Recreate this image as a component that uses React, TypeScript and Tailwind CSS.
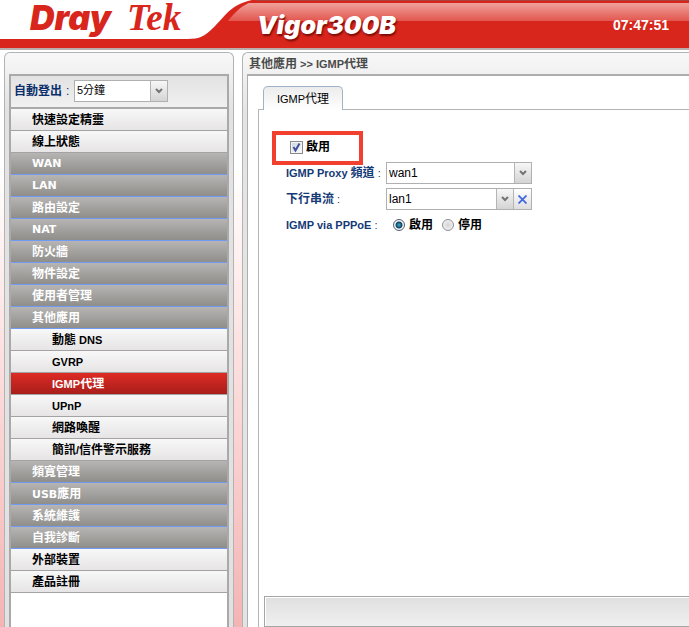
import { Fragment, useState } from "react";

type Item = { label: string; kind: "link" | "group" | "sub" };

const MENU: Item[] = [
  { label: "快速設定精靈", kind: "link" },
  { label: "線上狀態", kind: "link" },
  { label: "WAN", kind: "group" },
  { label: "LAN", kind: "group" },
  { label: "路由設定", kind: "group" },
  { label: "NAT", kind: "group" },
  { label: "防火牆", kind: "group" },
  { label: "物件設定", kind: "group" },
  { label: "使用者管理", kind: "group" },
  { label: "其他應用", kind: "group" },
  { label: "動態 DNS", kind: "sub" },
  { label: "GVRP", kind: "sub" },
  { label: "IGMP代理", kind: "sub" },
  { label: "UPnP", kind: "sub" },
  { label: "網路喚醒", kind: "sub" },
  { label: "簡訊/信件警示服務", kind: "sub" },
  { label: "頻寬管理", kind: "group" },
  { label: "USB應用", kind: "group" },
  { label: "系統維護", kind: "group" },
  { label: "自我診斷", kind: "group" },
  { label: "外部裝置", kind: "link" },
  { label: "產品註冊", kind: "link" },
];

const KIND_CLASS = {
  link: "border-b border-[#a3a3a3] bg-linear-to-b from-[#f8f8f8] to-[#e6e4e4] pl-[21px] text-black",
  group:
    "border-b border-[#6f9bf5] bg-linear-to-b from-[#b6b5b3] to-[#8f8e8b] pl-[21px] text-white font-['DejaVu_Sans','Noto_Sans_CJK_TC',sans-serif]",
  sub: "border-b border-[#a3a3a3] bg-linear-to-b from-[#f8f8f8] to-[#e6e4e4] pl-[41px] text-black",
};

// Latin runs are set one size below the Chinese ones
function Mixed({ text }: { text: string }) {
  return (
    <>
      {text.split(/([\u4e00-\u9fff]+)/).map((part, i) =>
        i % 2 ? (
          <span key={i} className="text-[12px]">{part}</span>
        ) : (
          <Fragment key={i}>{part}</Fragment>
        ),
      )}
    </>
  );
}

function Combo({ id, value, options, clearable }: { id: string; value: string; options: string[]; clearable?: boolean }) {
  const [current, setCurrent] = useState(value);
  return (
    <div className="flex h-[22px] w-full border border-[#b0b0b0] bg-white">
      <div className="relative flex min-w-0 flex-1">
        <select
          id={id}
          value={current}
          onChange={(e) => setCurrent(e.target.value)}
          className="w-full appearance-none bg-transparent pl-[2px] text-black outline-none"
        >
          {options.map((o) => (
            <option key={o} value={o}>{o}</option>
          ))}
        </select>
        <span className="pointer-events-none absolute inset-y-0 right-0 flex w-[17px] items-center justify-center border-l border-[#b5b5b5] bg-linear-to-b from-[#f7f7f7] to-[#d4d4d4]">
          <svg width="8" height="6" viewBox="0 0 8 6" fill="none" stroke="#747474" strokeWidth="2">
            <path d="M1 1l3 3 3-3" />
          </svg>
        </span>
      </div>
      {clearable && (
        <button
          type="button"
          aria-label="clear"
          onClick={() => setCurrent("")}
          className="flex w-[18px] items-center justify-center border-l border-[#b5b5b5] bg-linear-to-b from-white to-[#dedede]"
        >
          <svg width="9" height="9" viewBox="0 0 9 9" stroke="#4468e0" strokeWidth="1.8">
            <path d="M0.5 0.5l8 8M8.5 0.5l-8 8" />
          </svg>
        </button>
      )}
    </div>
  );
}

function Header() {
  return (
    <header className="relative flex h-[50px] shrink-0 border-b-2 border-[#b9aeac] bg-[linear-gradient(to_bottom,#a8443c_0,#a8443c_1px,#d8251d_1px,#d8251d_3px,#f0a29c_3px,#e2564e_21px,#d9261c_21px)]">
      <svg className="absolute top-0 left-0" width="260" height="48" viewBox="0 0 260 48">
        <path d="M0 0H258C238 4 232 18 219 31C212 38 205 43 190 43H0z" fill="#d9261c" />
        <path d="M0 0H252C229 5 225 17 213 28C205 36 200 39 187 39H0z" fill="#fff" />
      </svg>
      <div className="relative flex w-[257px] items-baseline pl-[30px] leading-[36px] text-[#d9261c]">
        <span className="w-[97px] font-['Inter'] text-[34px] font-black italic">Dray</span>
        <span className="font-['Liberation_Serif'] text-[37px] font-bold italic">Tek</span>
      </div>
      <h1 className="relative flex-1 pt-[8px] font-['Inter'] text-[25px] leading-[34px] font-black text-white italic [text-shadow:1px_2px_2px_#7a0c08]">
        Vigor300B
      </h1>
      <time className="relative pt-[17px] pr-[20px] text-[14px] leading-[16px] font-bold text-white">07:47:51</time>
    </header>
  );
}

function Sidebar() {
  const [active, setActive] = useState("IGMP代理");
  return (
    <nav className="flex w-[230px] shrink-0 flex-col rounded-t-md border border-b-0 border-[#b3b3b3] bg-linear-to-b from-[#f8f8f8] via-[#e2e2e2] via-10% to-[#e2e2e2] px-1 pt-[21px]">
      <div className="flex flex-1 flex-col border-2 border-b-0 border-[#a9a9a9] bg-white">
        <div className="flex h-[33px] items-center border-b-2 border-[#a9a9a9] bg-linear-to-b from-[#e2e2e2] to-[#f1f1f1] pb-[2px] pl-[3px]">
          <label htmlFor="logout" className="w-[60px] text-[12px] font-bold text-[#0b2f6b]">
            自動登出<span className="pl-1 font-normal">:</span>
          </label>
          <div className="w-[94px] text-[11px]">
            <Combo id="logout" value="5分鐘" options={["5分鐘", "10分鐘", "30分鐘"]} />
          </div>
        </div>
        {MENU.map((m) => (
          <button
            key={m.label}
            onClick={() => setActive(m.label)}
            className={`h-[22px] text-left text-[11px] leading-[22px] font-bold ${
              active === m.label
                ? "border-b border-[#a3a3a3] bg-linear-to-b from-[#dd2a23] to-[#a91f1b] pl-[41px] text-white"
                : KIND_CLASS[m.kind]
            }`}
          >
            <Mixed text={m.label} />
          </button>
        ))}
      </div>
    </nav>
  );
}

function FormRow({ label, htmlFor, children }: { label: string; htmlFor?: string; children: React.ReactNode }) {
  return (
    <div className="flex h-[26px] items-center">
      <label htmlFor={htmlFor} className="w-[100px] shrink-0 text-[11px] font-bold text-[#153a75]">
        <Mixed text={label} />
        <span className="pl-[3px] font-normal">:</span>
      </label>
      {children}
    </div>
  );
}

function Check() {
  const [on, setOn] = useState(true);
  return (
    <div className="-ml-[14px] flex h-[34px] w-[91px] items-center border-4 border-[#f2402f] pb-[2px] pl-[14px]">
      <label className="flex items-center gap-[3px] text-[12px] font-bold text-black">
        <span className="relative flex">
          <input
            type="checkbox"
            checked={on}
            onChange={() => setOn(!on)}
            className="size-[13px] appearance-none border border-[#8b8b8b] bg-linear-to-br from-[#c9d3dc] to-white shadow-[inset_0_0_0_1px_#f4f4f4]"
          />
          {on && (
            <svg className="pointer-events-none absolute inset-0" width="13" height="13" viewBox="0 0 13 13" fill="none" stroke="#3f4f9c" strokeWidth="2">
              <path d="M3.5 6l2 3.5L9.5 2.5" />
            </svg>
          )}
        </span>
        啟用
      </label>
    </div>
  );
}

function Radios() {
  const [value, setValue] = useState("啟用");
  return (
    <div className="flex gap-[9px] pl-[7px]">
      {["啟用", "停用"].map((o) => (
        <label key={o} className="flex items-center gap-[4px] text-[12px] font-bold text-black">
          <input
            type="radio"
            name="pppoe"
            checked={value === o}
            onChange={() => setValue(o)}
            className="size-[12px] appearance-none rounded-full border border-[#8b8f94] bg-radial from-[#d4d4d4] to-[#fafafa] checked:border-[#4e6072] checked:bg-[radial-gradient(circle,#3fb4dd_0,#14506f_35%,#17415c_42%,#f4f4f4_56%)]"
          />
          {o}
        </label>
      ))}
    </div>
  );
}

export default function App() {
  return (
    <div className="flex min-h-screen flex-col font-['Liberation_Sans','Noto_Sans_CJK_TC',sans-serif]">
      <Header />
      <div className="flex flex-1 gap-2 bg-linear-to-b from-white from-20% to-[#f4b4b4] pt-[2px] pl-1">
        <Sidebar />
        <main className="flex min-w-0 flex-1 flex-col rounded-tl-md border border-r-0 border-b-0 border-[#b3b3b3] bg-linear-to-b from-[#f8f8f8] via-[#e4e4e4] via-10% to-[#e4e4e4] pl-1">
          <h2 className="h-[21px] pl-[2px] text-[11px] leading-[22px] font-bold text-[#4b4b4b]">
            <Mixed text="其他應用 >> IGMP代理" />
          </h2>
          <div className="flex flex-1 flex-col border-t-2 border-l border-[#adadad] bg-white pt-[10px] pl-[10px]">
            <div className="flex">
              <div className="w-[5px] border-b border-[#b5b5b5]" />
              <button className="h-[24px] w-[80px] rounded-t-[5px] border border-b-0 border-[#9fb2c8] bg-linear-to-b from-[#ececec] to-white text-[11px] text-black">
                <Mixed text="IGMP代理" />
              </button>
              <div className="flex-1 border-b border-[#b5b5b5]" />
            </div>
            <section className="flex flex-1 flex-col border-l border-[#b5b5b5]">
              <form className="flex flex-col pt-[21px] pl-[27px] text-[12px]">
                <Check />
                <div className="-mt-[5px]">
                  <FormRow label="IGMP Proxy 頻道" htmlFor="channel">
                    <div className="w-[146px]">
                      <Combo id="channel" value="wan1" options={["wan1", "wan2"]} />
                    </div>
                  </FormRow>
                  <FormRow label="下行串流" htmlFor="downstream">
                    <div className="w-[146px]">
                      <Combo id="downstream" value="lan1" options={["", "lan1", "lan2"]} clearable />
                    </div>
                  </FormRow>
                  <FormRow label="IGMP via PPPoE">
                    <Radios />
                  </FormRow>
                </div>
              </form>
              <footer className="mt-auto ml-[5px] h-[31px] border border-r-0 border-[#a5a5a5] bg-linear-to-b from-[#dfdfdf] to-[#f0f0f0] shadow-[inset_1px_1px_0_#fff]" />
            </section>
          </div>
        </main>
      </div>
    </div>
  );
}
